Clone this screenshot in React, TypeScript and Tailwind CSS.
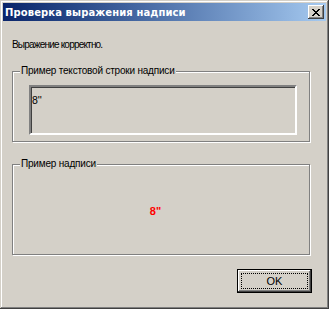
const ui = { fontFamily: '"Liberation Sans", Arial, sans-serif' };

function GroupBox({ title, className, children }: { title: string; className: string; children?: React.ReactNode }) {
  return (
    <div
      className={`relative w-[298px] border border-[#808080] shadow-[1px_1px_0_#ffffff,inset_1px_1px_0_#ffffff] ${className}`}
    >
      <span className="absolute left-[7px] top-[-8px] bg-[#d4d0c8] px-[1px] text-[10px] leading-[13px] tracking-[-0.2px] text-black">
        {title}
      </span>
      {children}
    </div>
  );
}

export default function App() {
  return (
    <div
      style={ui}
      className="flex h-[309px] w-[329px] flex-col bg-[#d4d0c8] p-[3px] shadow-[inset_-1px_-1px_0_#404040,inset_1px_1px_0_#d4d0c8,inset_-2px_-2px_0_#808080,inset_2px_2px_0_#ffffff]"
    >
      {/* title bar */}
      <div className="flex h-[18px] items-center justify-between bg-gradient-to-r from-[#0a246a] to-[#a6caf0] pl-[2px] pr-[2px]">
        <span className="font-['DejaVu_Sans',sans-serif] text-[10px] font-bold leading-[13px] tracking-[0.1px] text-white">
          Проверка выражения надписи
        </span>
        <button className="flex h-[14px] w-[16px] items-center justify-center bg-[#d4d0c8] shadow-[inset_-1px_-1px_0_#404040,inset_1px_1px_0_#ffffff,inset_-2px_-2px_0_#808080]">
          <svg width="8" height="7" viewBox="0 0 8 7" shapeRendering="crispEdges">
            <path d="M0 0h2v1H0zM6 0h2v1H6zM1 1h2v1H1zM5 1h2v1H5zM2 2h4v1H2zM3 3h2v1H3zM2 4h4v1H2zM1 5h2v1H1zM5 5h2v1H5zM0 6h2v1H0zM6 6h2v1H6z" fill="#000" />
          </svg>
        </button>
      </div>

      <div className="flex flex-1 flex-col pl-[9px]">
        <p className="mt-[17px] text-[10px] leading-[13px] tracking-[-0.8px] text-black">Выражение корректно.</p>

        <GroupBox title="Пример текстовой строки надписи" className="mt-[20px] h-[71px] pl-[16px] pt-[13px]">
          <div className="h-[50px] w-[268px] border-2 border-t-[#808080] border-l-[#808080] border-r-white border-b-white px-[1px] shadow-[inset_1px_1px_0_#404040,inset_-1px_-1px_0_#d4d0c8]">
            <span className="text-[10.5px] leading-[13px] text-black">8''</span>
          </div>
        </GroupBox>

        <GroupBox title="Пример надписи" className="mt-[22px] flex h-[91px] items-center justify-center pr-[11px] pt-[3px]">
          <span className="text-[11px] font-bold leading-[13px] text-[#ff0000]">8"</span>
        </GroupBox>

        <button className="ml-[225px] mt-[14px] flex h-[24px] w-[75px] items-center justify-center border border-black bg-[#d4d0c8] p-[3px] shadow-[inset_-1px_-1px_0_#404040,inset_1px_1px_0_#ffffff,inset_-2px_-2px_0_#808080]">
          <span className="flex h-full w-full items-center justify-center border border-dotted border-black text-[11px] leading-[13px] text-black">
            OK
          </span>
        </button>
      </div>
    </div>
  );
}
